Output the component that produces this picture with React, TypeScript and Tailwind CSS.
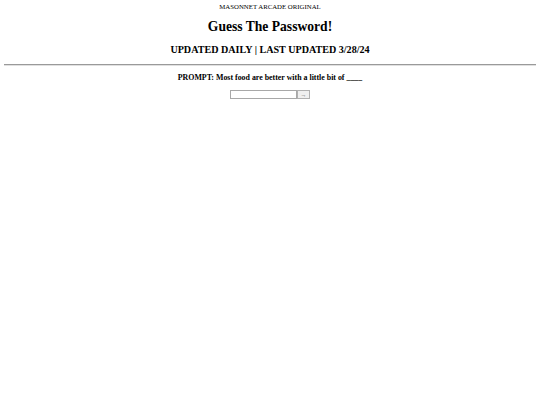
export default function App() {
  return (
    <div className="min-h-screen bg-white px-[4px] pt-[3px] text-center text-black" style={{ fontFamily: '"Liberation Serif", "Times New Roman", serif' }}>
      <p className="text-[6.8px] leading-[8px]">MASONNET ARCADE ORIGINAL</p>
      <h1 className="mt-[8px] text-[13.6px] font-bold leading-[16px]">Guess The Password!</h1>
      <h2 className="mt-[9px] text-[10.1px] font-bold leading-[12px]">UPDATED DAILY | LAST UPDATED 3/28/24</h2>
      <div className="mt-[8px] border-t border-b border-t-[#9a9a9a] border-b-[#e0e0e0]" />
      <h4 className="mt-[7px] text-[7.9px] font-bold leading-[10px]">PROMPT: Most food are better with a little bit of ____</h4>
      <div className="mt-[7px] flex justify-center">
        <input type="text" className="h-[9px] w-[67px] border border-[#a8a8a8] bg-white px-[1px] text-[7px] outline-none" />
        <button className="flex h-[9px] w-[13px] items-center justify-center border border-[#b0b0b0] bg-[#efefef] text-[6px] leading-none text-[#555]">→</button>
      </div>
    </div>
  );
}
